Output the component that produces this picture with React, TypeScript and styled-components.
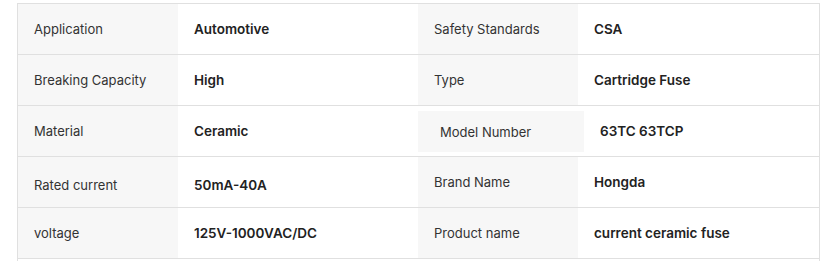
import React from "react";
import styled, { createGlobalStyle } from "styled-components";

const GlobalStyle = createGlobalStyle`
  body {
    margin: 0;
    background: #ffffff;
    font-family: Inter, "Noto Sans", Arial, sans-serif;
  }
`;

type Spec = {
  label: string;
  value: string;
  labelShift?: boolean;
  lower?: boolean;
};

const rows: [Spec, Spec][] = [
  [
    { label: "Application", value: "Automotive" },
    { label: "Safety Standards", value: "CSA" },
  ],
  [
    { label: "Breaking Capacity", value: "High" },
    { label: "Type", value: "Cartridge Fuse" },
  ],
  [
    { label: "Material", value: "Ceramic" },
    { label: "Model Number", value: "63TC 63TCP", labelShift: true },
  ],
  [
    { label: "Rated current", value: "50mA-40A", lower: true },
    { label: "Brand Name", value: "Hongda" },
  ],
  [
    { label: "voltage", value: "125V-1000VAC/DC" },
    { label: "Product name", value: "current ceramic fuse" },
  ],
];

const Page = styled.div`
  padding: 3px 12px 0 17px;
`;

const Table = styled.div`
  width: 801px;
  border: 1px solid #e0e0e0;
  border-bottom: none;
  padding-bottom: 6px;
`;

const Row = styled.div`
  display: flex;
  height: 50px;
  border-bottom: 1px solid #e0e0e0;
`;

const Pair = styled.div`
  display: flex;
  width: 400px;
  height: 100%;
`;

const Label = styled.div<{ $shift?: boolean; $lower?: boolean }>`
  box-sizing: border-box;
  display: flex;
  align-items: center;
  width: ${(p) => (p.$shift ? "166px" : "160px")};
  height: ${(p) => (p.$shift ? "41px" : "100%")};
  margin-top: ${(p) => (p.$shift ? "5px" : "0")};
  padding-left: ${(p) => (p.$shift ? "22px" : "16px")};
  padding-top: ${(p) => (p.$lower ? "6px" : "0")};
  background: #f7f7f7;
  color: #333333;
  font-size: 13px;
  font-weight: 400;
`;

const Value = styled.div<{ $lower?: boolean }>`
  box-sizing: border-box;
  display: flex;
  align-items: center;
  flex: 1;
  padding-left: 16px;
  padding-top: ${(p) => (p.$lower ? "6px" : "0")};
  color: #222222;
  font-size: 13.5px;
  font-weight: 600;
`;

const App = () => {
  return (
    <>
      <GlobalStyle />
      <Page>
        <Table>
          {rows.map((row, i) => (
            <Row key={i}>
              {row.map((spec, j) => (
                <Pair key={j}>
                  <Label $shift={spec.labelShift} $lower={spec.lower}>
                    {spec.label}
                  </Label>
                  <Value $lower={spec.lower}>{spec.value}</Value>
                </Pair>
              ))}
            </Row>
          ))}
        </Table>
      </Page>
    </>
  );
};

export default App;
